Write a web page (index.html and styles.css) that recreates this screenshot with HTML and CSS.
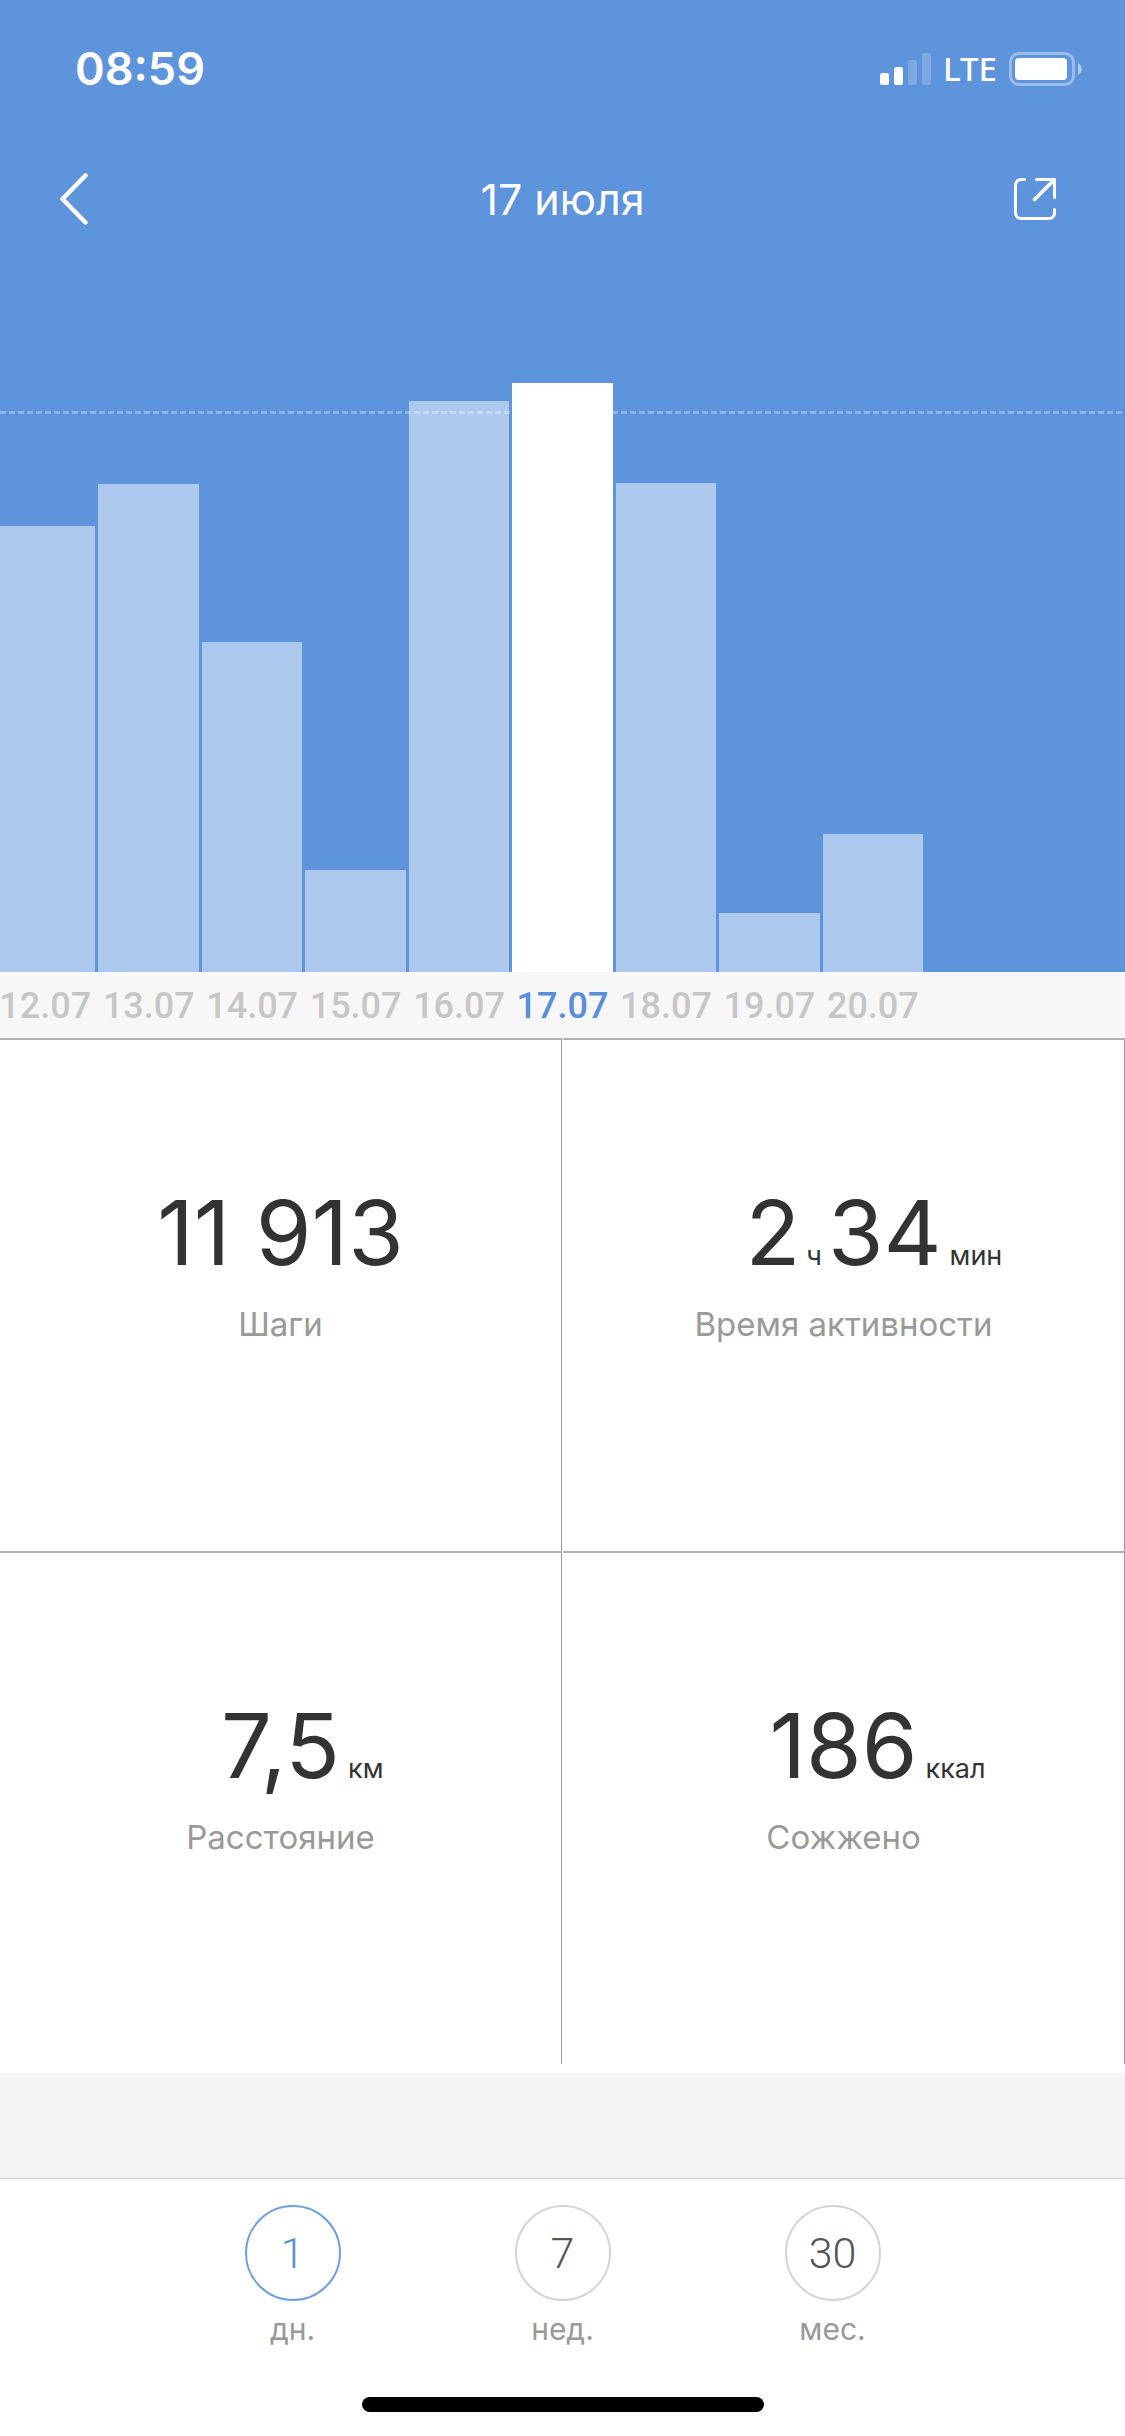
FILE: index.html
```html
<!DOCTYPE html>
<html lang="ru">
<head>
<meta charset="utf-8">
<meta name="viewport" content="width=device-width, initial-scale=1">
<title>17 июля</title>
<link rel="stylesheet" href="styles.css">
</head>
<body>
<div class="screen">
  <header class="top">
    <div class="status">
      <time class="clock">08:59</time>
      <div class="indicators">
        <svg class="signal" width="52" height="34" viewBox="0 0 52 34" fill="#fff" aria-hidden="true">
          <rect x="0" y="21" width="9" height="12" rx="2.5"/>
          <rect x="14" y="15" width="9" height="18" rx="2.5"/>
          <rect x="28" y="8" width="9" height="25" rx="2.5" opacity=".2"/>
          <rect x="42" y="1" width="9" height="32" rx="2.5" opacity=".2"/>
        </svg>
        <span class="network">LTE</span>
        <svg class="battery" width="74" height="34" viewBox="0 0 74 34" fill="#fff" aria-hidden="true">
          <rect x="1.5" y="1.5" width="63" height="31" rx="8.5" fill="none" stroke="#fff" stroke-width="3" opacity=".38"/>
          <rect x="6" y="6" width="52" height="22" rx="4"/>
          <path d="M69 11c5 2.500 5 9.500 0 12z" opacity=".5"/>
        </svg>
      </div>
    </div>
    <nav class="nav">
      <button class="nav-button" type="button" aria-label="Назад">
        <svg width="28" height="52" viewBox="0 0 28 52" fill="none" stroke="#fff" stroke-width="4.500" stroke-linecap="round" stroke-linejoin="round"><path d="M25.500 2.500 2.500 26l23 23.500"/></svg>
      </button>
      <h1 class="title">17 июля</h1>
      <button class="nav-button" type="button" aria-label="Поделиться">
        <svg width="42" height="42" viewBox="0 0 42 42" fill="none" stroke="#fff" stroke-width="3" stroke-linecap="round" stroke-linejoin="round"><path d="M10.500 1.500H7A5.500 5.500 0 0 0 1.500 7v28A5.500 5.500 0 0 0 7 40.500h28a5.500 5.500 0 0 0 5.500-5.500v-3.500M22.500 1.500h18v18"/><path d="M40 2 20.500 21.500" stroke-width="3.600"/></svg>
      </button>
    </nav>
    <div class="chart">
      <div class="goal"></div>
      <ol class="columns bars">
        <li class="bar" style="height:446px"></li>
        <li class="bar" style="height:488px"></li>
        <li class="bar" style="height:330px"></li>
        <li class="bar" style="height:102px"></li>
        <li class="bar" style="height:571px"></li>
        <li class="bar selected" style="height:589px"></li>
        <li class="bar" style="height:489px"></li>
        <li class="bar" style="height:59px"></li>
        <li class="bar" style="height:138px"></li>
        <li class="bar" style="height:0px"></li>
        <li class="bar" style="height:0px"></li>
      </ol>
    </div>
  </header>
  <ol class="columns axis">
    <li class="date">12.07</li>
    <li class="date">13.07</li>
    <li class="date">14.07</li>
    <li class="date">15.07</li>
    <li class="date">16.07</li>
    <li class="date current">17.07</li>
    <li class="date">18.07</li>
    <li class="date">19.07</li>
    <li class="date">20.07</li>
    <li class="date"></li>
    <li class="date"></li>
  </ol>
  <main class="stats">
    <section class="stat">
      <p class="value"><span class="number">11 913</span></p>
      <h2 class="label">Шаги</h2>
    </section>
    <section class="stat">
      <p class="value"><span class="number">2<small class="unit inner">ч</small>34</span><small class="unit">мин</small></p>
      <h2 class="label">Время активности</h2>
    </section>
    <section class="stat">
      <p class="value"><span class="number">7,5</span><small class="unit">км</small></p>
      <h2 class="label">Расстояние</h2>
    </section>
    <section class="stat">
      <p class="value"><span class="number">186</span><small class="unit">ккал</small></p>
      <h2 class="label">Сожжено</h2>
    </section>
  </main>
  <div class="spacer"></div>
  <footer class="periods">
    <div class="tabs">
      <button class="tab active" type="button"><span class="circle">1</span><span class="caption">дн.</span></button>
      <button class="tab" type="button"><span class="circle">7</span><span class="caption">нед.</span></button>
      <button class="tab" type="button"><span class="circle">30</span><span class="caption">мес.</span></button>
    </div>
    <div class="home"></div>
  </footer>
</div>
</body>
</html>
```

FILE: styles.css
```css
* {
  box-sizing: border-box;
}

body,
h1,
h2,
p,
ol {
  margin: 0;
  padding: 0;
}

body {
  background: #fff;
  color: #333;
  font-family: Inter, "Liberation Sans", sans-serif;
}

ol {
  list-style: none;
}

button {
  padding: 0;
  border: 0;
  background: none;
  color: inherit;
  font: inherit;
}

svg {
  display: block;
}

.screen {
  display: flex;
  flex-direction: column;
  min-height: 100vh;
}

.top {
  background: #5e94db;
  color: #fff;
}

.status {
  display: flex;
  justify-content: space-between;
  align-items: center;
  padding: 40px 42px 0 75px;
}

.clock {
  font-size: 45px;
  font-weight: 600;
  line-height: 58px;
}

.indicators {
  display: flex;
  align-items: center;
}

.network {
  margin: 0 12px 0 11px;
  font-family: "Noto Sans", sans-serif;
  font-size: 33px;
  font-weight: 500;
  line-height: 34px;
}

.nav {
  display: flex;
  justify-content: space-between;
  align-items: center;
  padding: 73px 60px 0;
}

.nav-button {
  display: flex;
  width: 51px;
}

.title {
  font-size: 43px;
  font-weight: 400;
  line-height: 56px;
}

.chart {
  display: grid;
  align-items: end;
  height: 745px;
  overflow: hidden;
}

.goal,
.bars {
  grid-area: 1 / 1;
}

.goal {
  z-index: 1;
  height: 3px;
  margin-bottom: 558px;
  background: repeating-linear-gradient(90deg, rgba(255, 255, 255, .3) 0 6px, transparent 6px 9px);
}

.columns {
  display: flex;
  justify-content: center;
  gap: 3px;
  overflow: hidden;
}

.bar,
.date {
  flex: 0 0 8.93%;
}

.bars {
  align-items: flex-end;
}

.bar {
  background: #adc8ed;
}

.bar.selected {
  background: #fff;
}

.axis {
  padding: 10px 0 8px;
  background: #f7f7f7;
}

.date {
  color: #c6c6c6;
  font-family: Roboto, sans-serif;
  font-size: 36px;
  font-weight: 500;
  line-height: 48px;
  text-align: center;
}

.date.current {
  color: #588fda;
}

.stats {
  display: grid;
  grid-template-columns: 1fr 1fr;
  column-gap: 1px;
  padding-bottom: 9px;
}

.stat {
  min-height: 513px;
  padding-top: 149px;
  border-top: 2px solid #b0b0b0;
  border-right: 1px solid #999;
}

.value {
  display: grid;
  grid-template-columns: 1fr auto 1fr;
  align-items: baseline;
  line-height: 88px;
}

.number {
  grid-column: 2;
  font-size: 90px;
}

.unit {
  margin-left: 8px;
  font-size: 27px;
  line-height: 32px;
}

.unit.inner {
  margin: 0 6px;
}

.label {
  margin-top: 27px;
  color: #999;
  font-size: 33px;
  font-weight: 400;
  line-height: 40px;
  text-align: center;
}

.spacer {
  flex: 1 0 105px;
  background: #f4f4f4;
}

.periods {
  padding: 26px 0 24px;
  border-top: 1px solid #ccc;
}

.tabs {
  display: flex;
  justify-content: center;
}

.tab {
  display: flex;
  flex: 0 0 24%;
  flex-direction: column;
  align-items: center;
  gap: 10px;
}

.circle {
  width: 96px;
  height: 96px;
  border: 2px solid #d4d4d4;
  border-radius: 50%;
  color: #555;
  font-family: Roboto, sans-serif;
  font-size: 43px;
  font-weight: 300;
  line-height: 92px;
}

.caption {
  color: #999;
  font-size: 30px;
  line-height: 36px;
}

.active .circle {
  border-color: #6c9ee0;
  color: #588fda;
}

.home {
  width: 402px;
  max-width: 80%;
  height: 15px;
  margin: 50px auto 0;
  border-radius: 8px;
  background: #000;
}
```
